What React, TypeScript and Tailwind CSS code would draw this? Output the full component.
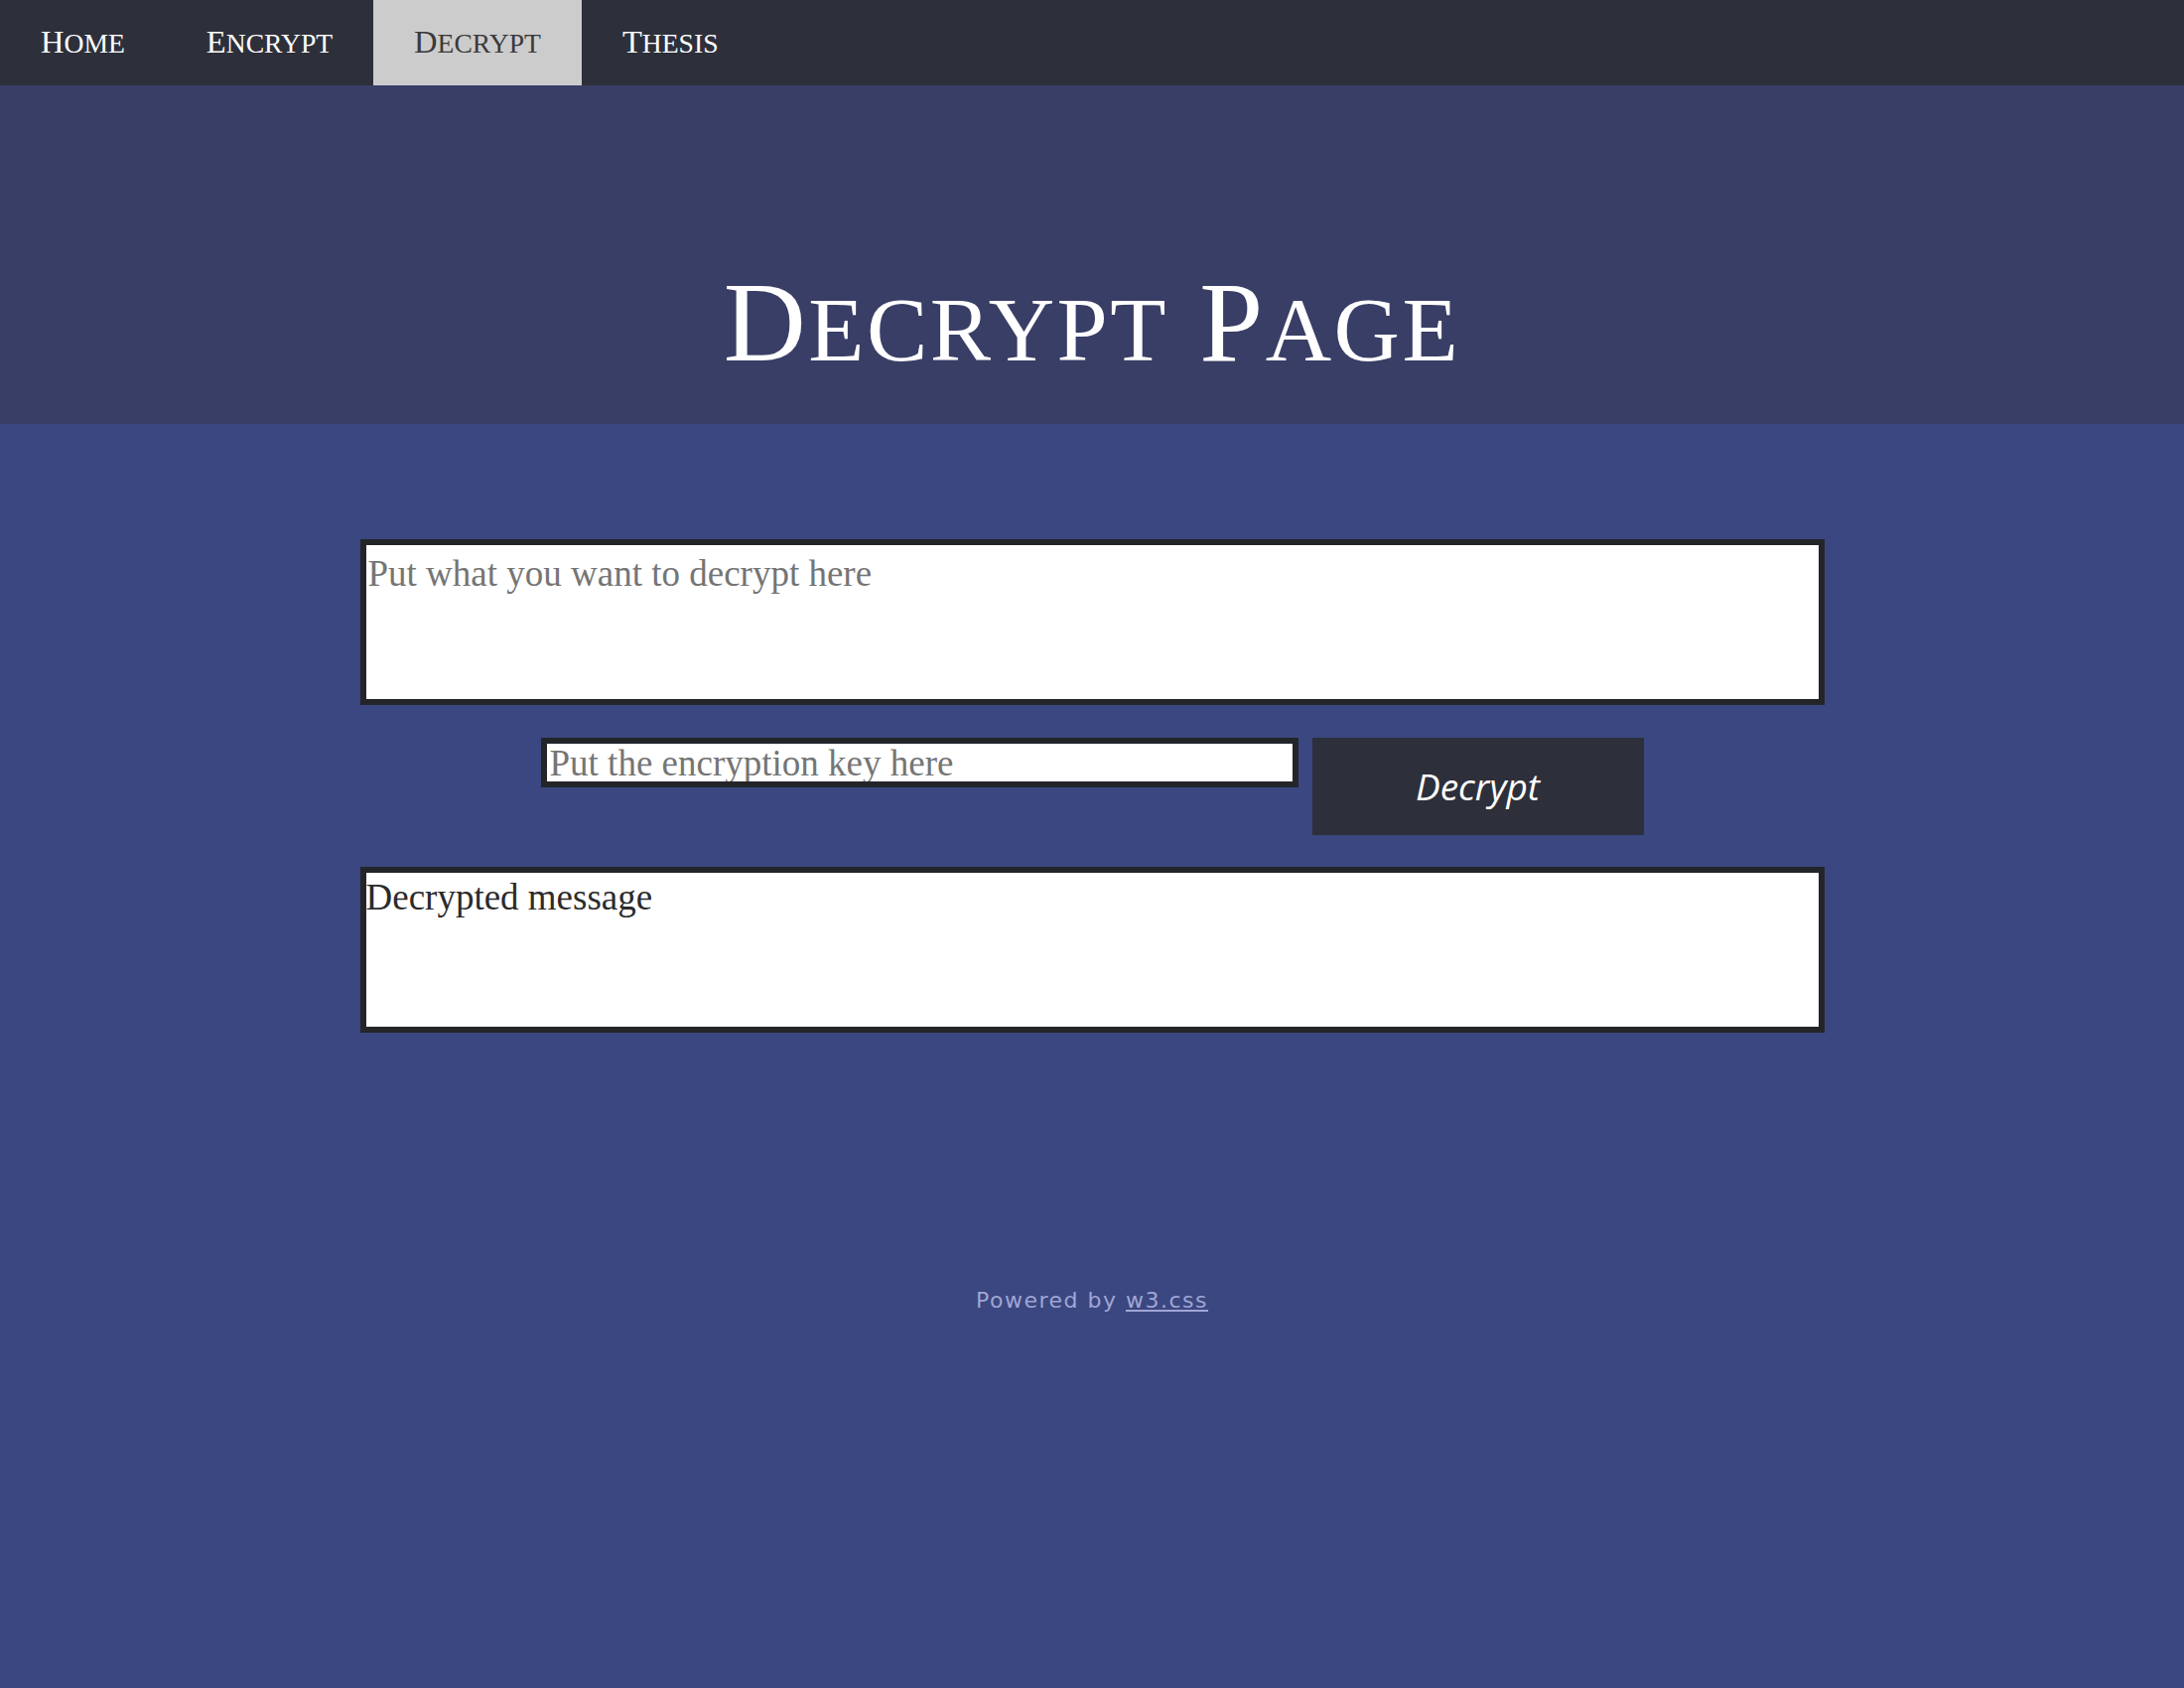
import React from "react";

const SERIF = "font-['Liberation_Serif','Times_New_Roman',serif]";

const NAV = [
  { first: "H", rest: "OME" },
  { first: "E", rest: "NCRYPT" },
  { first: "D", rest: "ECRYPT", active: true },
  { first: "T", rest: "HESIS" },
];

function SmallCaps({ first, rest, ratio }: { first: string; rest: string; ratio: string }) {
  return (
    <span>
      {first}
      <span className={ratio}>{rest}</span>
    </span>
  );
}

export default function App() {
  return (
    <div className="min-h-screen bg-[#3a4780]">
      {/* top bar */}
      <nav className="flex h-[86px] bg-[#2d303a]">
        {NAV.map((item) => (
          <a
            key={item.first + item.rest}
            href="#"
            className={`flex items-center px-[41px] pb-[2px] text-[32.5px] leading-none ${SERIF} ${
              item.active ? "bg-[#cccccc] text-[#3a3a3a]" : "text-white"
            }`}
          >
            <SmallCaps first={item.first} rest={item.rest} ratio="text-[0.85em]" />
          </a>
        ))}
      </nav>

      {/* header */}
      <header className="h-[341px] bg-[#393e66] pt-[181px]">
        <h1 className={`text-center text-[115px] leading-none tracking-[2.5px] text-white ${SERIF}`}>
          <SmallCaps first="D" rest="ECRYPT" ratio="text-[0.8em]" />{" "}
          <SmallCaps first="P" rest="AGE" ratio="text-[0.8em]" />
        </h1>
      </header>

      <main className="mx-auto w-[1475px] pt-[116px]">
        <textarea
          placeholder="Put what you want to decrypt here"
          className={`block h-[167px] w-full resize-none border-[6px] border-[#232529] bg-white pl-[2px] pt-[1px] text-[37px] text-[#2b2b2b] outline-none placeholder:text-[#757575] ${SERIF}`}
        />

        <div className="mt-[33px] flex items-start justify-center gap-[14px]">
          <input
            type="text"
            placeholder="Put the encryption key here"
            className={`block h-[50px] w-[763px] border-[6px] border-[#232529] bg-white px-[3px] text-[37px] leading-[38px] text-[#2b2b2b] outline-none placeholder:text-[#757575] ${SERIF}`}
          />
          <button className="flex h-[98px] w-[334px] items-center justify-center bg-[#2d303b] font-['Open_Sans',sans-serif] text-[37px] italic text-white">
            Decrypt
          </button>
        </div>

        <div
          className={`mt-[32px] h-[167px] border-[6px] border-[#232529] bg-white pt-[6px] text-[37px] leading-[38px] text-[#2b2b2b] ${SERIF}`}
        >
          Decrypted message
        </div>
      </main>

      <footer className="mt-[253px] pb-[300px] text-center font-['DejaVu_Sans',Verdana,sans-serif] text-[22px] tracking-[1.5px] text-[#a0a5d5]">
        Powered by{" "}
        <a href="#" className="underline">
          w3.css
        </a>
      </footer>
    </div>
  );
}
